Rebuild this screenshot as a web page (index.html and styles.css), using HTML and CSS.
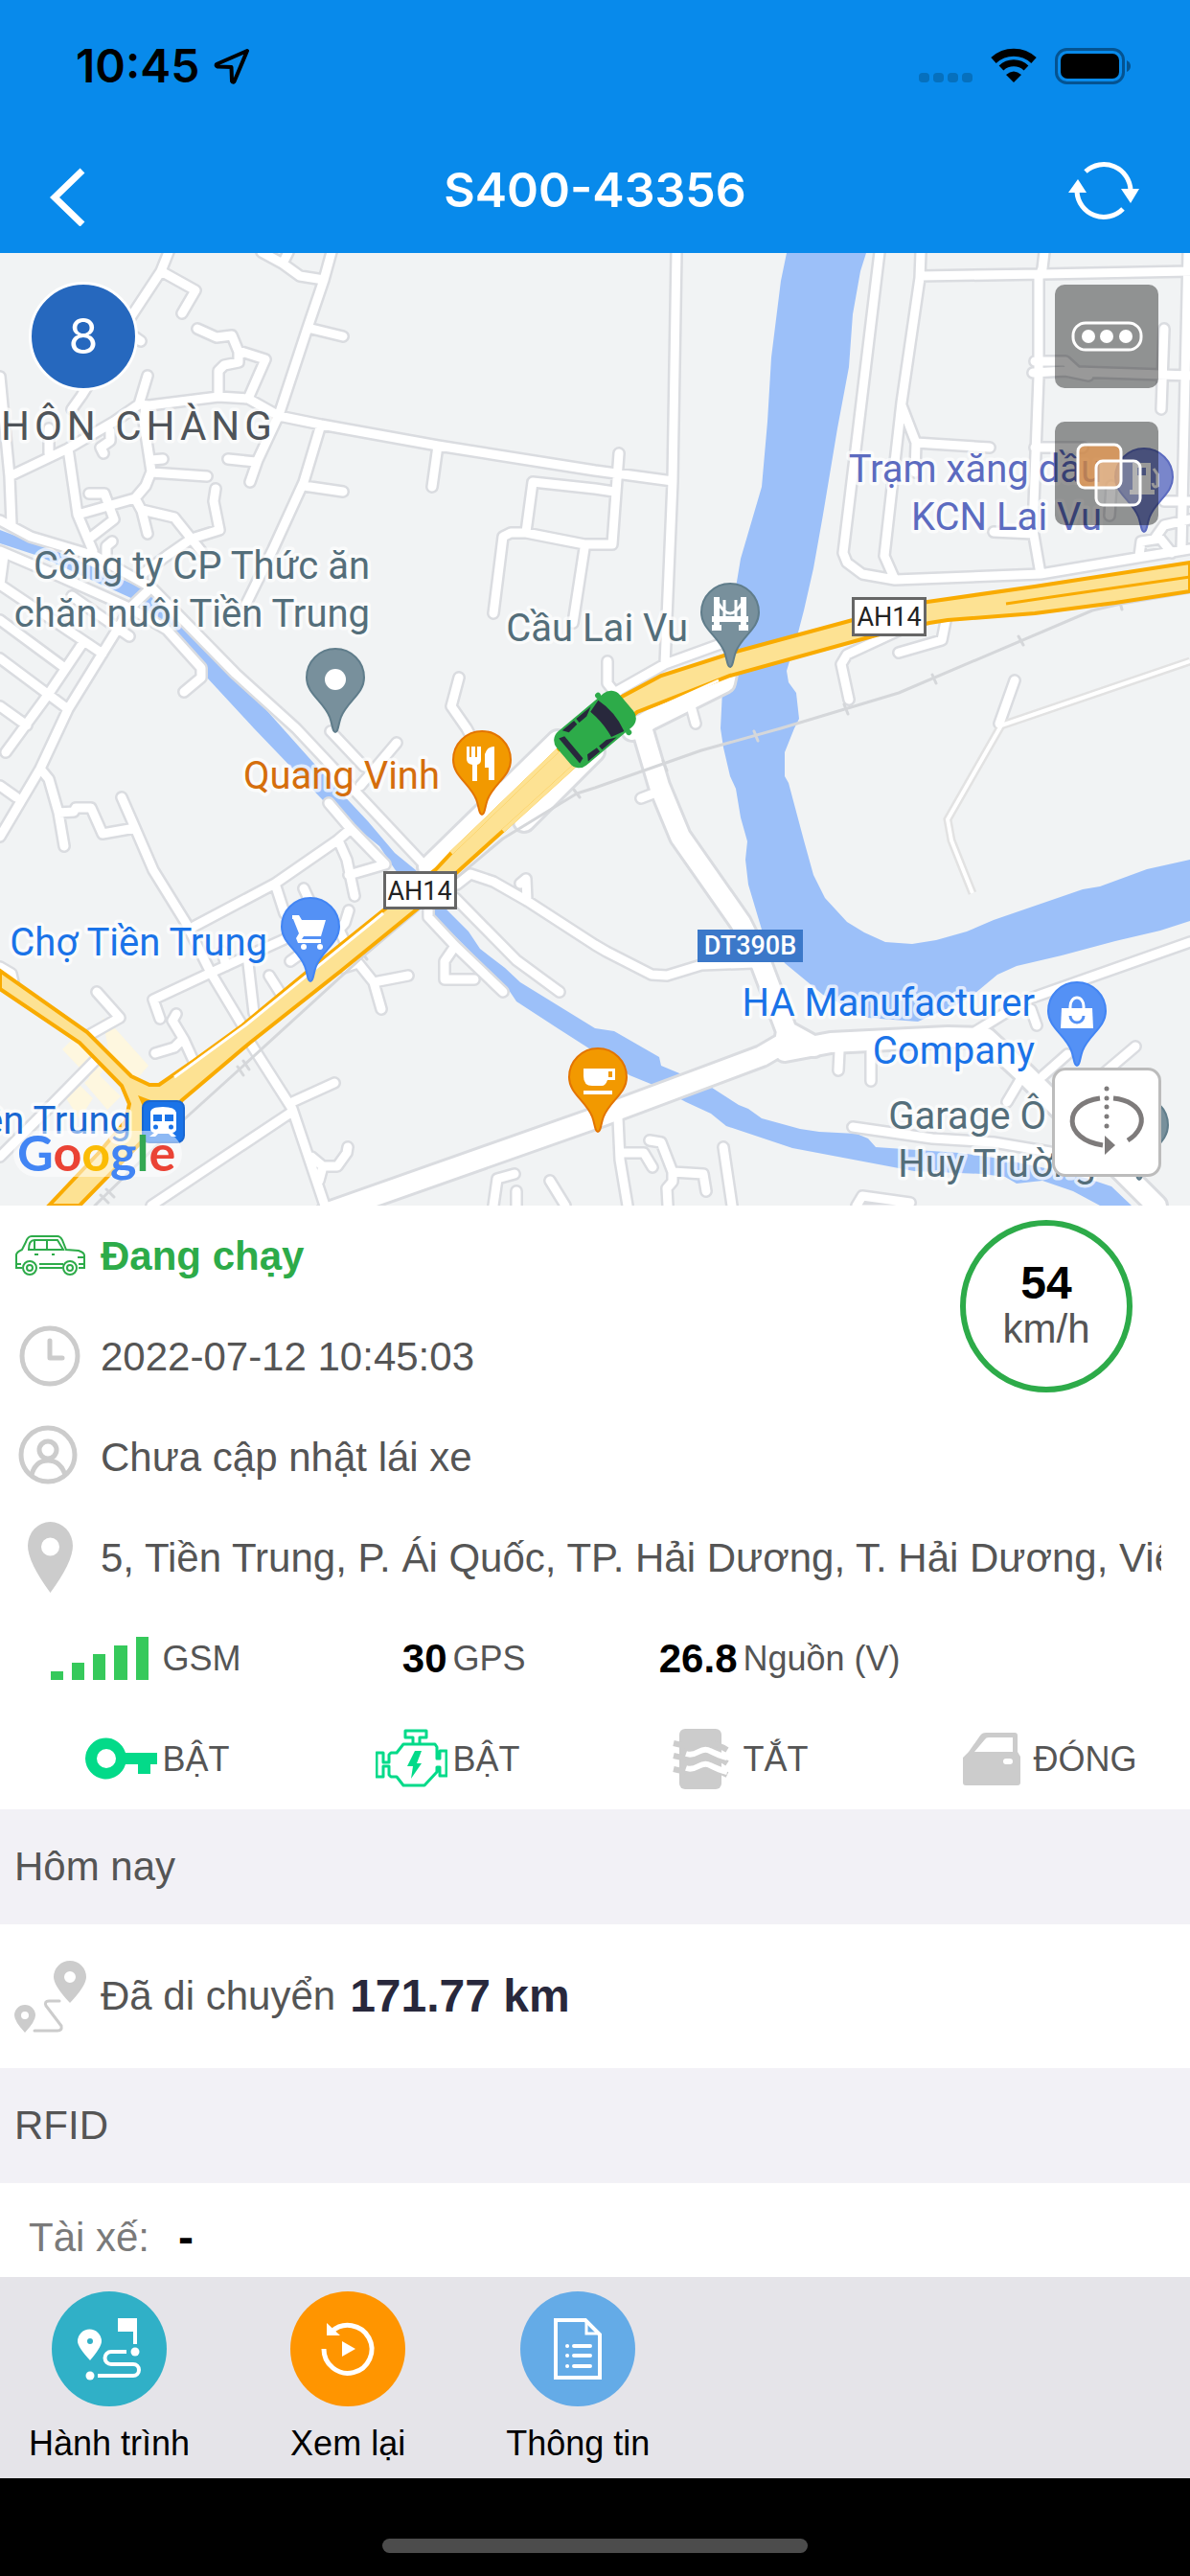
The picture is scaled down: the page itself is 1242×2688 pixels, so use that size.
FILE: index.html
```html
<!DOCTYPE html>
<html lang="vi">
<head>
  <meta charset="UTF-8" />
  <meta name="viewport" content="width=device-width, initial-scale=1" />
  <title>S400-43356</title>
  <link rel="stylesheet" href="styles.css">
</head>
<body>
  <header>
    <div class="status-bar">
      <div class="status-left">
        <span class="time">10:45</span>
        <svg width="38" height="38" viewBox="0 0 38 38"><path d="M35 3L3 17q-1 2 1 2.500l14.500.5.5 14.500q1 2 2.500.5z" fill="none" stroke="#000" stroke-width="4" stroke-linejoin="round"/></svg>
      </div>
      <div class="status-right">
        <svg width="56" height="38" viewBox="0 0 56 38" fill="#0670bd"><rect x="0" y="26" width="11" height="10" rx="4"/><rect x="15" y="26" width="11" height="10" rx="4"/><rect x="30" y="26" width="11" height="10" rx="4"/><rect x="45" y="26" width="11" height="10" rx="4"/></svg>
        <svg width="50" height="38" viewBox="0 0 50 38"><path d="M4 13A31 31 0 0 1 46 13" fill="none" stroke="#000" stroke-width="8"/><path d="M12 21A19 19 0 0 1 38 21" fill="none" stroke="#000" stroke-width="7"/><path d="M25 36l-8-8q8-7 16 0z"/></svg>
        <svg width="80" height="38" viewBox="0 0 80 38"><rect x="1.500" y="1.500" width="70" height="35" rx="11" fill="none" stroke="#045391" stroke-width="3"/><rect x="6" y="6" width="61" height="26" rx="7"/><path d="M75 13q4 2 4 6t-4 6z" fill="#045391"/></svg>
      </div>
    </div>
    <nav>
      <button class="nav-btn" aria-label="Quay lại">
        <svg width="75" height="75" viewBox="0 0 75 75"><path d="M34 17L5 45l29 28" fill="none" stroke="#fff" stroke-width="7"/></svg>
      </button>
      <h1>S400-43356</h1>
      <button class="nav-btn" aria-label="Tải lại">
        <svg width="75" height="75" viewBox="0 0 75 75"><g fill="none" stroke="#fff" stroke-width="5"><path d="M18 18A28 28 0 0 1 65 38"/><path d="M9 39A28 28 0 0 0 57 57"/></g><g fill="#fff"><path d="M55 36h19l-9 15zM0 40h19L10 26z"/></g></svg>
      </button>
    </nav>
  </header>

  <section class="map">
    <svg class="map-canvas" viewBox="0 0 1242 994">
      <defs>
        <path id="pin" d="M0 0c-3 0-3-8-6-16C-13-33-30-40-30-57a30 30 0 0 1 60 0c0 17-17 24-24 41C3-8 3 0 0 0z"/>
        <path id="lanes" d="M176-1L168 19L139 63L85 149L75 163 M168 19L204 39L190 63 M130 80L147 92 M273-1L295 11L313 24L338 28 M301-1L295 11
          M346-1L338 28L321 78L291 169L269 216L261 239 M321 78L358 87 M206 79L226 88L242 86L249 103L249 114L234 117L228 123L228 149 M249 102L277 111L259 152
          M10 233L71 204L119 176L145 158L156 159L228 150L259 152L291 170L335 179L457 201L621 227L702 238 M154 128L145 158 M335 179L317 239L285 309L257 366
          M317 243L358 249 M457 201L451 244 M238 215L267 218 M641 249L621 246L556 239L549 291 M515 376L525 296L533 292L549 292L610 304L639 304L646 209 M610 308L598 386
          M0 129L10 233L12 283 M71 204L81 273L97 311 M81 273L141 256L152 243L158 228L150 176L152 159 M158 229L216 233 M158 216L170 215
          M93 251L109 251L119 278L93 298 M141 256L148 269L154 293 M148 268L182 276L210 311 M225 246L223 259L229 289L200 298L174 316L147 336
          M115 186L115 196L105 203L108 209 M51 209L51 183 M117 301L111 306L111 316
          M0 279L32 296L99 316L158 349L246 439L309 496L447 643 M0 311L59 336L135 370L174 393L210 433L210 443L192 458
          M158 349L137 369L71 476L42 538L0 609 M0 346L107 418 M0 383L65 431 M0 423L71 476 M0 473L28 493 M87 406L50 461L6 521 M0 556L17 568 M4 316L0 346 M75 358L135 400
          M706-1L702 238L694 429L641 459 M918-1L880 313L884 323L900 335L934 341L1086 335L1187 318L1242 309 M961-1L960 26L941 156L923 316L934 341 M960 24L1088 22L1242 19
          M1090-1L1088 16L1084 26L1084 129L1078 289L1086 335 M941 159L956 198L1033 203 M956 198L955 229 M1080 113L1112 113L1124 124L1242 128 M1078 125L1112 123L1136 128
          M1215 79L1212 163 M1240-1L1233 309 M1080 203L1130 203 M1037 291L1078 293 M1189 316L1191 301L1211 298L1223 313 M1205 298L1215 284L1242 278 M1160 243L1158 274 M1215 259L1242 259
          M987 384L983 404L938 417 M938 394L884 419L878 429L886 466 M1059 446L1043 491 M634 426L634 449L645 463 M720 469L726 491 M694 429L752 408
          M42 538L51 549L61 584L67 619 M61 584L77 583L79 579L95 579L107 606L141 600 M127 568L141 600L160 644L194 699L220 751L253 806L261 824L305 893L339 994
          M366 601L352 613L287 658L202 703 M343 574L366 601L402 638L364 649 M354 615L362 633L370 671 M287 658L297 689 M317 663L323 676
          M167 799L160 779L220 751L297 716 M236 744L232 729 M259 741L265 793 M281 754L293 773 M303 739L317 729 M364 686L360 699L354 706L360 719
          M358 746L374 741L390 761L398 789 M390 761L426 754 M447 686L447 693L475 723L525 771 M475 723L464 739L464 758L495 758 M475 673L539 738L584 771
          M477 659L491 648L515 656L550 676L621 722L633 729L680 753L696 754L732 743L787 741 M550 676L549 653L543 658 M376 556L414 511 M345 499L380 536
          M479 443L471 473L487 496L523 563 M101 771L125 798L93 816 M184 794L180 801L192 821L202 843 M162 835L182 829L190 821 M99 843L44 899L0 943 M0 745L12 752L16 770
          M305 886L349 866 M305 896L158 994 M325 943L337 953L352 953L362 939L363 933 M337 953L333 968 M669 569L682 564 M1017 813L1072 779L1242 719 M1076 789L1082 806 M876 833L875 853 M909 833L909 864
          M1185 828L1152 856 M1114 836L1088 859 M1067 859L1051 886 M890 912L973 924L1037 928L1096 938 M645 903L647 946L655 994 M651 939L672 939L681 954
          M678 926L690 928L702 959L702 969L696 976L697 994 M702 959L734 961L737 979 M755 933L764 994 M894 998L950 998 M894 994L900 984L950 991 M515 994L519 966L537 961 M574 968L590 994 M539 979L539 994"/>
        <path id="avenues" d="M340 1002L621 903L795 838L819 824L821 812L795 743L773 699L710 609L688 556L669 492 M819 833L867 824L989 818L1029 819L1069 856L1207 994 M821 812L850 828 M758 439L756 448L680 486L660 498"/>
        <path id="side-lanes" d="M447 641L582 509 M547 593L620 520"/>
      </defs>

      <!-- river and canal -->
      <path class="water" d="M821 0L815 29L805 109L801 176L795 244L773 319L768 349L760 413L754 456L752 496L755 516L762 546L768 559L773 589L780 614L778 633L781 659L795 706L819 741L859 774L906 798L958 802L1001 783L1017 773L1041 753L1061 744L1108 733L1164 718L1211 707L1242 697V633L1215 639L1197 643L1148 661L1130 664L1037 696L1009 708L977 717L952 721L924 719L902 709L884 698L861 673L849 649L839 613L823 553L819 546V521L829 496L834 486L831 459L823 448L821 436L833 396L839 373L849 329L859 273L874 183L886 119L890 64L898 19L904 0z"/>
      <path class="water" d="M0 289L63 313L147 349L174 369L210 403L246 441L295 496L337 543L384 593L412 626L434 644L467 686L489 708L501 726L527 746L543 761L621 809L641 812L688 839L690 848L714 858L740 869L771 889L781 893L795 903L835 914L855 917L894 919L906 924L914 933L1001 939L1037 944L1096 956L1136 966L1160 974L1181 994H1148L1120 979L1088 968L1061 971L1049 964L1025 961L954 958L827 934L758 911L742 898L716 886L684 869L657 858L621 834L582 809L539 781L529 766L491 729L455 693L436 673L412 643L396 619L337 571L265 496L216 443L178 393L139 361L40 316L0 303z"/>
      <path fill="#fef7df" d="M107 798l14 12 34 38-14 16-22 0zM65 831l18-18 30 30-14 24zM88 866l12-12 26 26-14 14zM69 882l14-14 14 14-14 22z"/>

      <!-- roads -->
      <g class="road-case"><use href="#lanes" stroke-width="14"/><use href="#side-lanes" stroke-width="26"/><use href="#avenues" stroke-width="26"/></g>
      <path d="M1242 426L1045 493L989 591L993 613L1015 668" fill="none" stroke="#e2e2e2" stroke-width="9"/>
      <path d="M1242 426L1045 493L989 591L993 613L1015 668" fill="none" stroke="#fff" stroke-width="4"/>
      <g class="road-fill"><use href="#lanes" stroke-width="9"/><use href="#side-lanes" stroke-width="20"/><use href="#avenues" stroke-width="20"/></g>
      <path class="rail" d="M1242 354L1170 366L1140 373L938 459L815 496L732 519L621 558L602 564L525 611L380 733L253 849L190 906L107 986L99 994M1168 361l3 11M1063 400l5 9M973 440l4 9M881 471l4 10M787 499l4 10M692 530l4 10M599 560l6 8M377 729l6 8M248 849l6 9M254 843l6 9M105 983l8 8M111 977l8 8"/>

      <!-- highway AH14 -->
      <path class="highway" d="M1242 323L1080 348L968 364L890 383L768 416L690 441L649 463L582 519L471 626L455 643L400 686L329 743L253 806L202 843L166 868H156L137 859L91 813L0 749V768L83 824L127 869L135 888L131 906L103 939L51 994H83L150 925L190 884L261 824L356 749L436 684L475 648L525 603L602 533L665 479L762 441L914 399L970 386L989 383L1080 376L1164 365L1242 353z"/>
      <path d="M1242 338L1097 359L1050 366" fill="none" stroke="#f9ab00" stroke-width="3"/>
      <path d="M144 879l16 6-9 10z" fill="#f9ab00"/>
      <path d="M582 519L471 626M602 533L525 603" fill="none" stroke="#fde293" stroke-width="4"/>
      <path d="M256 806L400 689M182 860L256 806M750 446L670 482" fill="none" stroke="#fff" stroke-width="3"/>

      <!-- road shields -->
      <g class="shield">
        <rect x="890.500" y="360.500" width="75" height="38" fill="#fff" stroke="#666" stroke-width="3"/><text x="928" y="389" text-anchor="middle">AH14</text>
        <rect x="401.500" y="646.500" width="74" height="37" fill="#fff" stroke="#666" stroke-width="3"/><text x="438" y="675" text-anchor="middle">AH14</text>
        <rect x="728" y="706" width="110" height="34" fill="#3b78c9"/><text class="on-blue" x="783" y="732" text-anchor="middle">DT390B</text>
      </g>

      <!-- place labels -->
      <g class="place">
        <text class="region" x="1" y="195">HÔN CHÀNG</text>
        <g class="grey" text-anchor="end">
          <text x="386" y="340">Công ty CP Thức ăn</text>
          <text x="386" y="390">chăn nuôi Tiền Trung</text>
          <text x="718" y="405">Cầu Lai Vu</text>
          <text x="1092" y="914">Garage Ô</text>
          <text x="1144" y="964">Huy Trường</text>
        </g>
        <g class="indigo" text-anchor="end">
          <text x="1150" y="239">Trạm xăng dầu</text>
          <text x="1150" y="289">KCN Lai Vu</text>
        </g>
        <text class="orange" x="459" y="559" text-anchor="end">Quang Vinh</text>
        <g class="blue" text-anchor="end">
          <text x="279" y="733">Chợ Tiền Trung</text>
          <text x="1080" y="796">HA Manufacturer</text>
          <text x="1080" y="846">Company</text>
        </g>
        <text class="navy" x="137" y="919" text-anchor="end">ền Trung</text>
      </g>

      <!-- pins -->
      <g stroke-width="2">
        <g transform="translate(350 500)"><use href="#pin" fill="#78909c" stroke="#607d8b"/><circle cy="-55" r="11" fill="#fff"/></g>
        <g transform="translate(762 432)"><use href="#pin" fill="#78909c" stroke="#607d8b"/><path d="M-14-73v33M14-73v33M-19-50h38M-19-41h10M9-41h10" fill="none" stroke="#fff" stroke-width="6"/><path d="M-12-66q12 20 24 0M-6-70v18M6-70v18" fill="none" stroke="#fff" stroke-width="3"/></g>
        <g transform="translate(503 586)"><use href="#pin" fill="#f29900" stroke="#e37400"/><path fill="#fff" d="M-16-71h3v11h2v-11h4v11h2v-11h4v14q0 4-4 5v17h-5v-17q-6-1-6-6zM13-71v35H7v-13H3v-14q2-8 10-8z"/></g>
        <g transform="translate(324 760)"><use href="#pin" fill="#5491f5" stroke="#4285f4"/><path fill="#fff" d="M-19-69h7l3 5h25l-5 17h-18l-2 3h20v4h-24l-2-5 3-5-6-15h-1z"/><circle cx="-7" cy="-36" r="3" fill="#fff"/><circle cx="10" cy="-36" r="3" fill="#fff"/></g>
        <g transform="translate(624 917)"><use href="#pin" fill="#f29900" stroke="#e37400"/><path fill="#fff" d="M-15-66h33v12h-8q-2 6-6 6h-10q-9 0-9-10zM11-63v6h4v-6zM-15-43h30v4h-30z" fill-rule="evenodd"/></g>
        <g transform="translate(1124 848)"><use href="#pin" fill="#5491f5" stroke="#4285f4"/><path fill="#fff" d="M-16-60h32l1 21h-34z"/><path d="M-7-59v-3a7 9 0 0 1 14 0v3" fill="none" stroke="#fff" stroke-width="3"/><path d="M-7-52a7 7 0 0 0 14 0" fill="none" stroke="#5491f5" stroke-width="3"/></g>
        <g transform="translate(1194 291)"><use href="#pin" fill="#7986cb" stroke="#5c6bc0"/><path fill="#fff" fill-rule="evenodd" d="M-12-72h19v28h4v5h-26v-5h3zM-7-67v8h9v-8z"/><path d="M10-66l4 6v12q-4 3-5-3" fill="none" stroke="#fff" stroke-width="3"/></g>
        <g transform="translate(1189 967)"><use href="#pin" fill="#78909c" stroke="#607d8b"/></g>
      </g>
      <g transform="translate(148 884)"><rect x="1" y="1" width="43" height="43" rx="7" fill="#1a73e8" stroke="#1967d2" stroke-width="2"/><path fill="#fff" fill-rule="evenodd" d="M9 13q0-6 13-6t14 6v17q0 3-4 4l4 4h-5l-3-3h-11l-3 3h-6l5-4q-4-1-4-4zM12 15v7h9v-7zM24 15v7h9v-7zM12 28a2.500 2.500 0 1 0 5 0a2.500 2.500 0 1 0-5 0zM28 28a2.500 2.500 0 1 0 5 0a2.500 2.500 0 1 0-5 0z"/></g>
      <path d="M38 940H166" fill="none" stroke="#fff" stroke-opacity="0.5" stroke-width="48" stroke-linecap="round"/>
      <text class="google" x="18" y="958"><tspan fill="#4285f4">G</tspan><tspan fill="#ea4335">o</tspan><tspan fill="#fbbc05">o</tspan><tspan fill="#4285f4">g</tspan><tspan fill="#34a853">l</tspan><tspan fill="#ea4335">e</tspan></text>

      <!-- tracked vehicle -->
      <g transform="translate(621 497) rotate(-40)">
        <rect x="-43" y="-23" width="86" height="46" rx="12" fill="#2dab49"/>
        <circle cx="25" cy="-25" r="3" fill="#2dab49"/><circle cx="25" cy="25" r="3" fill="#2dab49"/>
        <g fill="#28283c"><path d="M8-17l14-4q6 21 0 42l-14-4q3-17 0-34z"/><path d="M-35-17l6 2v30l-6 2z"/><path d="M-27-21h16v5l-12 1zM-8-21h20l-10 5h-10zM-27 21h16v-5l-12-1zM-8 21h20l-10-5h-10z"/></g>
      </g>
    </svg>

    <div class="badge">8</div>
    <div class="map-tools">
      <button class="map-btn" aria-label="Tùy chọn">
        <svg width="75" height="75" viewBox="0 0 75 75"><rect x="2" y="23" width="71" height="28" rx="13" fill="none" stroke="#fff" stroke-width="3"/><g fill="#fff"><circle cx="18" cy="37" r="7"/><circle cx="37" cy="37" r="7"/><circle cx="57" cy="37" r="7"/></g></svg>
      </button>
      <button class="map-btn" aria-label="Lớp bản đồ">
        <svg width="75" height="75" viewBox="0 0 75 75"><rect x="7" y="7" width="45" height="45" rx="7" fill="#ef9a4b" fill-opacity=".7" stroke="#fff" stroke-width="3"/><rect x="26" y="24" width="46" height="46" rx="7" fill="#fff" fill-opacity=".25" stroke="#fff" stroke-width="3"/></svg>
      </button>
    </div>
    <button class="flip-btn" aria-label="Xoay">
      <svg width="84" height="84" viewBox="0 0 84 84"><g fill="none" stroke="#7e7b7b" stroke-width="5"><path d="M35 17C-4 22-4 60 38 66"/><path d="M49 17C81 20 88 46 64 61"/></g><g fill="#7e7b7b"><path d="M40 56l11 10-11 10z"/><circle cx="42" cy="7" r="2.500"/><circle cx="42" cy="17" r="2.500"/><circle cx="42" cy="26" r="2.500"/><circle cx="42" cy="36" r="2.500"/><circle cx="42" cy="46" r="2.500"/></g></svg>
    </button>
  </section>

  <main>
    <section class="vehicle">
      <div class="speed"><strong>54</strong><span>km/h</span></div>
      <div class="row running">
        <svg width="75" height="75" viewBox="0 0 75 75" fill="none" stroke="#2dab49" stroke-width="2"><path d="M8 50H2V36q1-3 6-5l4-8q2-6 6-6h27q3 0 5 4l4 10 13 1q6 2 6 5v13h-6"/><path d="M15 31q0-10 6-10h24l6 10zM21 21v10M34 21v10M21 36h4M39 36h3M66 39h6M2 46h5M67 46h6M26 46h25M26 50h24"/><circle cx="16" cy="50" r="7"/><circle cx="16" cy="50" r="3"/><circle cx="58" cy="50" r="7"/><circle cx="58" cy="50" r="3"/></svg>
        <strong>Đang chạy</strong>
      </div>
      <div class="row">
        <svg width="75" height="75" viewBox="0 0 75 75" fill="none" stroke="#ccc" stroke-width="5"><circle cx="37" cy="37" r="29"/><path d="M37 21v18h13" stroke-linecap="round" stroke-linejoin="round"/></svg>
        <span>2022-07-12 10:45:03</span>
      </div>
      <div class="row">
        <svg width="75" height="75" viewBox="0 0 75 75" fill="none" stroke="#ccc" stroke-width="5"><circle cx="35" cy="35" r="28"/><circle cx="35" cy="30" r="9"/><path d="M18 56q4-15 17-15t18 15"/></svg>
        <span>Chưa cập nhật lái xe</span>
      </div>
      <div class="row">
        <svg width="75" height="75" viewBox="0 0 75 75"><path fill="#ccc" fill-rule="evenodd" d="M37.500 74Q14 42 14 25a23.500 25 0 0 1 47 0Q61 42 37.500 74zM28 26a9.500 9.500 0 1 0 19 0a9.500 9.500 0 1 0-19 0z"/></svg>
        <span class="address">5, Tiền Trung, P. Ái Quốc, TP. Hải Dương, T. Hải Dương, Việt Nam</span>
      </div>
      <div class="stats">
        <div class="stat">
          <svg width="111" height="45" viewBox="0 0 111 45" fill="#36c95b"><path d="M0 36h13v9H0zM22 27h13v18H22zM44 18h13v27H44zM66 9h14v36H66zM89 0h13v45H89z"/></svg>
          <span>GSM</span>
        </div>
        <div class="stat"><strong>30</strong><span>GPS</span></div>
        <div class="stat"><strong>26.8</strong><span>Nguồn (V)</span></div>
      </div>
      <div class="stats">
        <div class="stat">
          <svg width="75" height="75" viewBox="0 0 75 75"><path fill="#03da89" fill-rule="evenodd" d="M0 37a21.500 22 0 0 1 42-6h33v12h-7v10H55V43H42a21.500 22 0 0 1-42-6zM12 37a10 10 0 1 0 20 0a10 10 0 1 0-20 0z"/></svg>
          <span>BẬT</span>
        </div>
        <div class="stat">
          <svg width="75" height="75" viewBox="0 0 75 75"><g fill="none" stroke="#03da89" stroke-width="3" stroke-linejoin="round"><path d="M39 22v-7h-8V8h22v7h-7v7"/><path d="M29 22h33l2 3v12h3v-8h7v26h-7v-9h-3v5L51 65H29l-7-9h-6l-2-2v-9H8v11H1V31h7v10h6v-8l2-2h6z"/></g><path fill="#03da89" d="M41 29l-8 16h6l-2 13 11-16h-5l5-13z"/></svg>
          <span>BẬT</span>
        </div>
        <div class="stat">
          <svg width="75" height="75" viewBox="0 0 75 75"><rect x="14" y="6" width="44" height="63" rx="6" fill="#ccc"/><g fill="none" stroke-width="6"><path stroke="#ccc" d="M8 21l13 3M8 34l13 3M8 48l13 3M46 21q8 1 18 7M46 34q8 1 18 8M46 48q8 1 18 6"/><path stroke="#fff" d="M21 32q6 2 13-2t12-1q10 5 18 7M21 47q6 2 13-2t12-1q10 5 18 7"/></g></svg>
          <span>TẮT</span>
        </div>
        <div class="stat">
          <svg width="75" height="75" viewBox="0 0 75 75"><path fill="#ccc" fill-rule="evenodd" d="M7 36l6-6 12-17q2-3 6-3h30q3 0 3 3v17l3 5v27q0 3-3 3H10q-3 0-3-3zM19 30h40V15H34q-3 0-4 2zM52 37a3 3 0 0 0 0 6h4a3 3 0 0 0 0-6z"/></svg>
          <span>ĐÓNG</span>
        </div>
      </div>
    </section>

    <h2>Hôm nay</h2>
    <section class="row distance">
      <svg width="75" height="75" viewBox="0 0 75 75"><g fill="#ccc" fill-rule="evenodd"><path d="M58 44Q41 26 41 17a17 17 0 0 1 34 0Q75 26 58 44zM52 17a6 6 0 1 0 12 0a6 6 0 1 0-12 0z"/><path d="M11 75Q0 63 0 57a11 11 0 0 1 22 0Q22 63 11 75zM7 57a4 4 0 1 0 8 0a4 4 0 1 0-8 0z"/></g><path d="M47 42H36q-5 0-3 5l16 21q1 5-4 5H21" fill="none" stroke="#ccc" stroke-width="3" stroke-linecap="round"/></svg>
      <span>Đã di chuyển</span>
      <strong>171.77 km</strong>
    </section>

    <h2>RFID</h2>
    <section class="driver">
      <span>Tài xế:</span>
      <strong>-</strong>
    </section>
  </main>

  <footer>
    <div class="tabs">
      <a href="#hanh-trinh">
        <svg width="120" height="120" viewBox="0 0 120 120"><circle cx="60" cy="60" r="60" fill="#30b0c7"/><g fill="#fff"><path fill-rule="evenodd" d="M40 72Q27 58 27 52a12.500 12.500 0 0 1 25 0Q52 58 40 72zM37 52a3 3 0 1 0 6 0a3 3 0 1 0-6 0z"/><path d="M69 28h20v27h-4V42H69z"/><circle cx="87" cy="63" r="4.500"/><circle cx="40" cy="88" r="4.500"/></g><path d="M78 63H62a6 6 0 0 0 0 13h23a6 6 0 0 1 0 12H48" fill="none" stroke="#fff" stroke-width="4"/></svg>
        <span>Hành trình</span>
      </a>
      <a href="#xem-lai">
        <svg width="120" height="120" viewBox="0 0 120 120"><circle cx="60" cy="60" r="60" fill="#ff9500"/><path d="M35 60A25 25 0 1 0 43 42" fill="none" stroke="#fff" stroke-width="5"/><path fill="#fff" d="M38 33v13h14zM54 52l14 8-14 8z"/></svg>
        <span>Xem lại</span>
      </a>
      <a href="#thong-tin">
        <svg width="120" height="120" viewBox="0 0 120 120"><circle cx="60" cy="60" r="60" fill="#64abe7"/><g fill="none" stroke="#fff" stroke-width="4"><path d="M37 30h31l15 15v45H37z"/><path d="M69 30v14h14" stroke-width="3"/><path d="M56 57h17M56 67h17M56 78h17M49 57h.1M49 67h.1M49 78h.1" stroke-linecap="round"/></g></svg>
        <span>Thông tin</span>
      </a>
    </div>
    <div class="home-bar"><span></span></div>
  </footer>
</body>
</html>
```
FILE: styles.css
```css
* {
  box-sizing: border-box;
}
body {
  font-family: "Liberation Sans", Arial, sans-serif;
  font-size: 42px;
  line-height: 48px;
  margin: 0;
  height: 100vh;
  display: flex;
  flex-direction: column;
  background-color: #fff;
  color: #555;
}
svg {
  display: block;
  flex: none;
}
button {
  border: none;
  padding: 0;
  background: none;
  cursor: pointer;
}

/* header */
header {
  background-color: #088aeb;
  font-family: Inter, sans-serif;
}
.status-bar {
  height: 132px;
  padding: 5px 61px 0 79px;
  display: flex;
  justify-content: space-between;
  align-items: center;
  color: #000;
}
.status-left {
  display: flex;
  align-items: center;
  gap: 15px;
}
.status-right {
  display: flex;
  gap: 18px;
}
.time {
  font-size: 48px;
  font-weight: 600;
}
nav {
  height: 132px;
  padding: 0 52px;
  display: flex;
  justify-content: space-between;
  align-items: center;
}
h1 {
  margin: 0;
  font-size: 50px;
  font-weight: 600;
  color: #fff;
}

/* map */
.map {
  position: relative;
  background-color: #f1f3f4;
}
.map-canvas {
  width: 100%;
  height: auto;
}
.water {
  fill: #9cc0f9;
}
.road-case, .road-fill, .rail {
  fill: none;
  stroke-linecap: round;
  stroke-linejoin: round;
}
.road-case {
  stroke: #dadce0;
}
.road-fill {
  stroke: #fff;
}
.rail {
  stroke: #d5d7da;
  stroke-width: 3;
}
.highway {
  fill: #fde293;
  stroke: #f9ab00;
  stroke-width: 4;
}
.shield {
  font-family: Roboto, sans-serif;
  font-size: 27px;
  fill: #222;
}
.shield .on-blue {
  fill: #fff;
  font-weight: 500;
}
.place {
  font-family: Roboto, sans-serif;
  font-size: 40px;
  stroke: #fff;
  stroke-opacity: 0.7;
  stroke-width: 7;
  stroke-linejoin: round;
  paint-order: stroke;
}
.region {
  fill: #4f5459;
  font-size: 42px;
  letter-spacing: 5px;
}
.grey {
  fill: #546e7a;
}
.indigo {
  fill: #5c6bc0;
}
.orange {
  fill: #d56e0c;
}
.blue {
  fill: #1a73e8;
}
.navy {
  fill: #1967d2;
}
.google {
  font-family: Lato, sans-serif;
  font-size: 52px;
  font-weight: 700;
}
.badge {
  position: absolute;
  top: 30px;
  left: 30px;
  width: 114px;
  height: 114px;
  border: 3px solid #fff;
  border-radius: 50%;
  background-color: #2668be;
  color: #fff;
  font-family: Inter, sans-serif;
  font-size: 50px;
  line-height: 108px;
  text-align: center;
}
.map-tools {
  position: absolute;
  top: 33px;
  right: 33px;
  display: flex;
  flex-direction: column;
  gap: 35px;
}
.map-btn {
  width: 108px;
  height: 108px;
  border-radius: 10px;
  background-color: rgba(0, 0, 0, 0.4);
  display: flex;
  align-items: center;
  justify-content: center;
}
.flip-btn {
  position: absolute;
  right: 30px;
  bottom: 30px;
  width: 114px;
  height: 114px;
  border: 3px solid #bcbcbc;
  border-radius: 14px;
  background-color: #fff;
  display: flex;
  align-items: center;
  justify-content: center;
}

/* vehicle info */
main {
  flex: 1;
  min-height: 0;
  overflow: hidden;
}
.vehicle {
  position: relative;
}
.row {
  height: 105px;
  padding: 0 30px 0 15px;
  display: flex;
  align-items: center;
  gap: 15px;
}
.running {
  color: #2dab49;
}
.address {
  flex: 1;
  overflow: hidden;
  white-space: nowrap;
}
.speed {
  position: absolute;
  top: 15px;
  right: 60px;
  width: 180px;
  height: 180px;
  border: 6px solid #2dab49;
  border-radius: 50%;
  display: flex;
  flex-direction: column;
  align-items: center;
  justify-content: center;
}
.speed strong {
  font-size: 48px;
  color: #000;
}
.stats {
  height: 105px;
  padding: 0 15px;
  display: grid;
  grid-template-columns: repeat(4, 1fr);
  align-items: center;
}
.stat {
  display: grid;
  grid-template-columns: repeat(2, minmax(0, 1fr));
  align-items: center;
  justify-items: end;
  column-gap: 6px;
}
.stat span {
  justify-self: start;
  font-size: 36px;
  white-space: nowrap;
}
.stat strong {
  color: #000;
}
h2 {
  margin: 0;
  height: 120px;
  padding: 0 15px;
  background-color: #f2f1f6;
  font-size: 42px;
  font-weight: normal;
  line-height: 120px;
}
.distance {
  height: 150px;
}
.distance strong {
  font-size: 48px;
  color: #28283c;
}
.driver {
  height: 114px;
  padding: 0 30px;
  display: flex;
  align-items: center;
  gap: 30px;
  color: #7a7a7a;
}
.driver strong {
  font-size: 48px;
  color: #000;
}

/* bottom tabs */
.tabs {
  padding: 15px 30px;
  display: flex;
  gap: 105px;
  background-color: #e5e4e9;
}
.tabs a {
  display: flex;
  flex-direction: column;
  align-items: center;
  gap: 18px;
  font-size: 36px;
  line-height: 42px;
  color: #000;
  text-decoration: none;
}
.home-bar {
  height: 102px;
  padding-bottom: 24px;
  display: flex;
  align-items: flex-end;
  justify-content: center;
  background-color: #000;
}
.home-bar span {
  width: 444px;
  height: 15px;
  border-radius: 8px;
  background-color: #4c4c4c;
}
```
